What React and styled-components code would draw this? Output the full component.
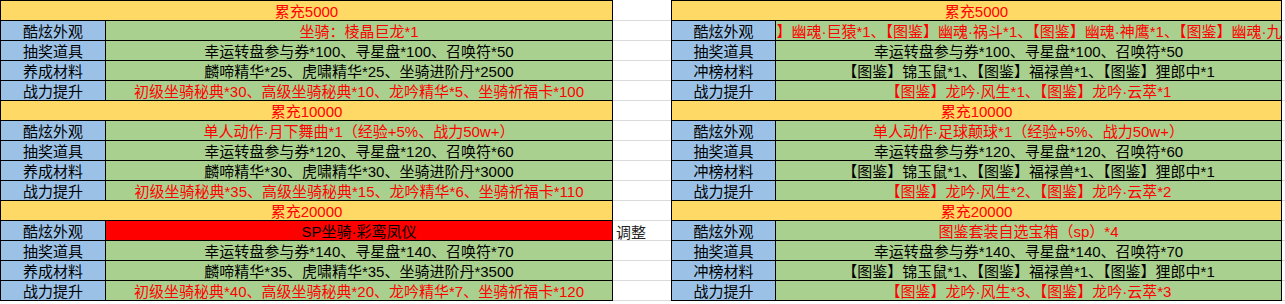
import styled, { createGlobalStyle } from "styled-components";

const GlobalStyle = createGlobalStyle`
  html, body {
    margin: 0;
    padding: 0;
    background: #ffffff;
  }
  body {
    font-family: "Liberation Sans", "Noto Sans CJK SC", sans-serif;
    font-size: 15px;
    color: #000;
  }
`;

const Sheet = styled.div`
  display: flex;
  align-items: flex-start;
  width: 1285px;
  height: 304px;
  overflow: hidden;
`;

const Table = styled.div`
  display: grid;
  grid-template-columns: ${(p) => p.$label}px ${(p) => p.$value}px;
  grid-auto-rows: 20px;
  border-left: 1px solid #000;
  border-top: 1px solid #000;
`;

const Cell = styled.div`
  box-sizing: border-box;
  display: flex;
  align-items: center;
  justify-content: center;
  border-right: 1px solid #000;
  border-bottom: 1px solid #000;
  white-space: nowrap;
  overflow: hidden;
  line-height: 19px;
  padding-top: 1px;
`;

const Header = styled(Cell)`
  grid-column: 1 / span 2;
  background: #ffd966;
  color: #ff0000;
`;

const Label = styled(Cell)`
  background: #9bc2e6;
`;

const Value = styled(Cell)`
  background: ${(p) => (p.$fill ? "#ff0000" : "#a9d08e")};
  color: ${(p) => (p.$red ? "#ff0000" : "#000")};
`;

const Gap = styled.div`
  display: flex;
  flex-direction: column;
  width: ${(p) => p.$width}px;
  flex: ${(p) => (p.$width ? "none" : "1")};
  padding-top: 1px;
`;

const GapRow = styled.div`
  box-sizing: content-box;
  height: 18px;
  padding: 1px 0 0 3px;
  border-bottom: 1px solid #dadada;
  display: flex;
  align-items: center;
  color: #222;
  white-space: nowrap;
`;

const leftTiers = [
  {
    title: "累充5000",
    rows: [
      ["酷炫外观", "坐骑：棱晶巨龙*1", "red"],
      ["抽奖道具", "幸运转盘参与券*100、寻星盘*100、召唤符*50"],
      ["养成材料", "麟啼精华*25、虎啸精华*25、坐骑进阶丹*2500"],
      ["战力提升", "初级坐骑秘典*30、高级坐骑秘典*10、龙吟精华*5、坐骑祈福卡*100", "red"],
    ],
  },
  {
    title: "累充10000",
    rows: [
      ["酷炫外观", "单人动作·月下舞曲*1（经验+5%、战力50w+）", "red"],
      ["抽奖道具", "幸运转盘参与券*120、寻星盘*120、召唤符*60"],
      ["养成材料", "麟啼精华*30、虎啸精华*30、坐骑进阶丹*3000"],
      ["战力提升", "初级坐骑秘典*35、高级坐骑秘典*15、龙吟精华*6、坐骑祈福卡*110", "red"],
    ],
  },
  {
    title: "累充20000",
    rows: [
      ["酷炫外观", "SP坐骑·彩鸾凤仪", "fill"],
      ["抽奖道具", "幸运转盘参与券*140、寻星盘*140、召唤符*70"],
      ["养成材料", "麟啼精华*35、虎啸精华*35、坐骑进阶丹*3500"],
      ["战力提升", "初级坐骑秘典*40、高级坐骑秘典*20、龙吟精华*7、坐骑祈福卡*120", "red"],
    ],
  },
];

const rank = "【图鉴】锦玉鼠*1、【图鉴】福禄兽*1、【图鉴】狸郎中*1";

const rightTiers = [
  {
    title: "累充5000",
    rows: [
      [
        "酷炫外观",
        "【图鉴】幽魂·巨猿*1、【图鉴】幽魂·祸斗*1、【图鉴】幽魂·神鹰*1、【图鉴】幽魂·九尾狐*1",
        "red",
      ],
      ["抽奖道具", "幸运转盘参与券*100、寻星盘*100、召唤符*50"],
      ["冲榜材料", rank],
      ["战力提升", "【图鉴】龙吟·风生*1、【图鉴】龙吟·云萃*1", "red"],
    ],
  },
  {
    title: "累充10000",
    rows: [
      ["酷炫外观", "单人动作·足球颠球*1（经验+5%、战力50w+）", "red"],
      ["抽奖道具", "幸运转盘参与券*120、寻星盘*120、召唤符*60"],
      ["冲榜材料", rank],
      ["战力提升", "【图鉴】龙吟·风生*2、【图鉴】龙吟·云萃*2", "red"],
    ],
  },
  {
    title: "累充20000",
    rows: [
      ["酷炫外观", "图鉴套装自选宝箱（sp）*4", "red"],
      ["抽奖道具", "幸运转盘参与券*140、寻星盘*140、召唤符*70"],
      ["冲榜材料", rank],
      ["战力提升", "【图鉴】龙吟·风生*3、【图鉴】龙吟·云萃*3", "red"],
    ],
  },
];

const RewardTable = ({ tiers, label, value }) => (
  <Table $label={label} $value={value}>
    {tiers.map((tier) => [
      <Header key={tier.title}>{tier.title}</Header>,
      ...tier.rows.map(([name, text, tone]) => [
        <Label key={tier.title + name}>{name}</Label>,
        <Value
          key={tier.title + name + "v"}
          $red={tone === "red"}
          $fill={tone === "fill"}
        >
          {text}
        </Value>,
      ]),
    ])}
  </Table>
);

const notes = Array.from({ length: 15 }, (_, i) => (i === 11 ? "调整" : ""));

export default function App() {
  return (
    <>
      <GlobalStyle />
      <Sheet>
        <RewardTable tiers={leftTiers} label={105} value={507} />
        <Gap $width={58}>
          {notes.map((n, i) => (
            <GapRow key={i}>{n}</GapRow>
          ))}
        </Gap>
        <RewardTable tiers={rightTiers} label={104} value={506} />
        <Gap>
          {notes.map((_, i) => (
            <GapRow key={i} />
          ))}
        </Gap>
      </Sheet>
    </>
  );
}
